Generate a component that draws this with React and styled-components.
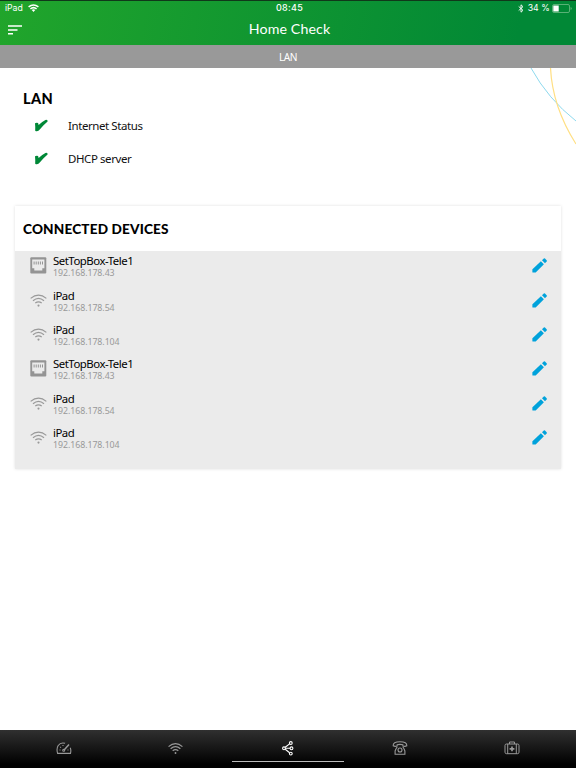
import React from 'react'
import styled, { createGlobalStyle } from 'styled-components'

const GlobalStyle = createGlobalStyle`
  html, body, #root {
    height: 100%;
    margin: 0;
  }
  body {
    overflow: hidden;
    background: #fff;
    font-family: "Noto Sans", "Open Sans", sans-serif;
  }
  svg {
    display: block;
    flex: none;
  }
`

const Screen = styled.div`
  position: relative;
  display: flex;
  flex-direction: column;
  height: 100%;
  background: #fff;
`

const Header = styled.header`
  box-sizing: border-box;
  height: 45px;
  border-top: 1px solid #10381a;
  background: linear-gradient(100deg, #21a52b 0%, #018836 90%);
  color: #fff;
`

const StatusBar = styled.div`
  display: grid;
  grid-template-columns: 1fr auto 1fr;
  align-items: center;
  height: 14px;
  padding: 0 4px 0 5px;
  font-family: Inter, "Liberation Sans", sans-serif;
  font-size: 8.7px;
  line-height: 14px;
`

const StatusLeft = styled.div`
  display: flex;
  align-items: center;
  gap: 5px;
  letter-spacing: -0.05px;
`

const Clock = styled.div`
  padding-left: 2px;
  font-size: 9px;
  font-weight: 500;
  letter-spacing: 0.3px;
`

const StatusRight = styled.div`
  display: flex;
  align-items: center;
  justify-content: flex-end;
  span {
    margin: 0 2px 0 4px;
    letter-spacing: 0.1px;
    white-space: nowrap;
  }
`

const TitleBar = styled.div`
  display: grid;
  grid-template-columns: 40px 1fr 40px;
  align-items: center;
  height: 29px;
`

const MenuButton = styled.button`
  margin: 0;
  padding: 0 0 0 8px;
  border: 0;
  background: none;
`

const Title = styled.h1`
  margin: -1px 0 0;
  padding-left: 3px;
  font-family: Lato, sans-serif;
  font-size: 14.2px;
  font-weight: 400;
  line-height: 20px;
  letter-spacing: 0.12px;
  text-align: center;
`

const SubHeader = styled.div`
  height: 23px;
  background: #999;
  color: #fff;
  font-size: 10.2px;
  line-height: 24px;
  letter-spacing: -0.5px;
  text-align: center;
`

const Arcs = styled.svg`
  position: absolute;
  top: 68px;
  right: 0;
`

const Main = styled.main`
  flex: 1;
  padding: 0 15px;
`

const Section = styled.section`
  height: 138px;
  box-sizing: border-box;
  padding: 21px 8px 0;
`

const Heading = styled.h2`
  margin: 0;
  font-family: Lato, sans-serif;
  font-size: ${p => p.$size};
  font-weight: 900;
  line-height: 20px;
  letter-spacing: ${p => p.$spacing};
  color: #000;
`

const Check = styled.div`
  display: flex;
  align-items: center;
  height: 33.6px;
  padding-left: 11px;
  gap: 20px;
  color: #111;
  font-size: 11.5px;
  letter-spacing: -0.42px;
`

const Checks = styled.div`
  margin-top: -0.5px;
`

const Card = styled.section`
  height: 262.5px;
  background: #ebebeb;
  box-shadow: 0 0 3px rgba(0, 0, 0, 0.13);
`

const CardHead = styled.div`
  display: flex;
  align-items: center;
  height: 44.5px;
  padding: 1px 8px 0;
  box-sizing: border-box;
  background: #fff;
`

const Device = styled.div`
  display: flex;
  align-items: center;
  height: 34.4px;
  box-sizing: border-box;
  padding: 0 14px 4px 15px;
`

const DeviceIcon = styled.div`
  display: flex;
  justify-content: center;
  width: 17px;
  color: #999;
`

const DeviceText = styled.div`
  flex: 1;
  padding-top: 3px;
  margin-left: 6px;
`

const Name = styled.div`
  color: #000;
  font-size: 11.4px;
  line-height: 12px;
  letter-spacing: -0.48px;
`

const Address = styled.div`
  color: #999;
  font-size: 8.8px;
  line-height: 12px;
  letter-spacing: -0.06px;
`

const TabBar = styled.nav`
  display: grid;
  grid-template-columns: repeat(5, 1fr);
  box-sizing: border-box;
  height: 38px;
  padding: 0 8px;
  background: linear-gradient(#303030, #000 90%);
`

const Tab = styled.a`
  display: flex;
  justify-content: center;
  box-sizing: border-box;
  height: 32px;
  padding: 10px 1px 0 0;
  border-bottom: ${p => (p.$active ? '1px solid #bbb' : '0')};
  color: ${p => (p.$active ? '#fff' : '#999')};
`

const WifiIcon = ({ width = 17, height = 13, stroke = 1.1 }) => (
  <svg width={width} height={height} viewBox="0 0 16 12" fill="none" stroke="currentColor" strokeWidth={stroke}>
    <path d="M.6 4Q8-2.2 15.4 4M2.8 6.2Q8 1.8 13.2 6.2M5 8.4Q8 6 11 8.4" />
    <circle cx="8" cy="10.8" r="1" fill="currentColor" stroke="none" />
  </svg>
)

const StatusWifi = () => (
  <svg width="11" height="8" viewBox="0 0 11 8" fill="none" stroke="#fff" strokeWidth="1.5">
    <path d="M.6 2.9Q5.5-1.1 10.4 2.9M2.4 4.9Q5.5 2.3 8.6 4.9" />
    <path d="M3.7 6Q5.5 4.7 7.3 6L5.5 7.9z" fill="#fff" stroke="none" />
  </svg>
)

const Bluetooth = () => (
  <svg width="6" height="9" viewBox="0 0 6 9" fill="none" stroke="#fff" strokeWidth=".9">
    <path d="M.7 2.5 5 6.3 3 8.2V.8l2 1.9L.7 6.5" />
  </svg>
)

const Battery = () => (
  <svg width="20" height="9" viewBox="0 0 20 9">
    <rect x=".5" y=".5" width="17" height="8" rx="1.5" fill="none" stroke="#70bb87" strokeWidth=".8" />
    <rect x="1.3" y="1.5" width="5.4" height="6" fill="#fff" />
    <path d="M18.6 3v3q1-.4 1-1.5t-1-1.5" fill="#70bb87" />
  </svg>
)

const CheckMark = () => (
  <svg width="14" height="13" viewBox="0 0 14 13">
    <path d="M1 4.3Q2.5 3.2 4.1 4L4.6 6Q8 2.8 11.4 1q2.6-.6 2.2 1.6Q9.5 6 4.8 11.5 2.8 12.8 1.2 11.7 1.4 7.6 1 4.3z" fill="#008837" />
  </svg>
)

const Ethernet = () => (
  <svg width="17" height="17" viewBox="0 0 17 17">
    <rect x=".3" y=".3" width="16" height="16.2" rx="1" fill="#949494" />
    <path d="M2.2 2.6h12.2v8.7h-2.1v2.1H4.3v-2.1H2.2z" fill="#ebebeb" />
    <path d="M4.1 4.5v3M6.2 4.5v3M8.3 4.5v3M10.4 4.5v3M12.5 4.5v3" stroke="#949494" strokeWidth="1" />
  </svg>
)

const Pencil = () => (
  <svg width="15" height="15" viewBox="0 0 15 15" fill="#00a2db">
    <path d="M.4 11.2 8.9 3.3l3 3L3.7 14.4H.8q-.4 0-.4-.5z" />
    <path d="m10 2.3 1.8-1.7q.6-.5 1.2 0l1.6 1.6q.5.6 0 1.2l-1.6 1.9z" />
  </svg>
)

const Gauge = () => (
  <svg width="16" height="16" viewBox="0 0 16 16" fill="none" stroke="currentColor" strokeWidth="1.1">
    <path d="M9.1 3.3Q4.6 2 2.2 5.5.2 8.5 1.6 13.4H14.5q.8-3.3-.3-5.6" />
    <path d="M8.3 9.8 13 4.6" strokeWidth="1.5" />
    <circle cx="7.7" cy="10.2" r="1" />
    <path d="M3.5 10h1M4.2 7l.8.6M7 5v1M11.5 10h1" />
  </svg>
)

const Share = () => (
  <svg width="14" height="16" viewBox="0 0 14 16" fill="none" stroke="currentColor" strokeWidth="1.1">
    <circle cx="3" cy="8.3" r="1.4" />
    <circle cx="9.8" cy="3" r="1.4" />
    <circle cx="10.5" cy="8.3" r="1.4" />
    <circle cx="9.8" cy="13.6" r="1.4" />
    <path d="M4.4 8.3H9M4.2 7.3 8.6 3.9M4.2 9.3l4.4 3.4" />
  </svg>
)

const Phone = () => (
  <svg width="16" height="16" viewBox="0 0 16 16" fill="none" stroke="currentColor" strokeWidth="1.1">
    <path d="M1.2 5.8Q.8 1.8 8 1.8t6.8 4q-1.9 1-3.9.1V4.8Q8 4 5.1 4.8v1.1Q3.1 6.8 1.2 5.8z" />
    <path d="M5.2 6.8Q3.8 9 3.1 11v3.2h9.8V11q-.7-2-2.1-4.2" />
    <circle cx="8" cy="10" r="2" />
  </svg>
)

const FirstAid = () => (
  <svg width="16" height="16" viewBox="0 0 16 16" fill="none" stroke="currentColor" strokeWidth="1">
    <rect x="1" y="4" width="14" height="9.7" rx="1.5" />
    <path d="M5.5 4V2h5v2M3.7 4v9.7M12.3 4v9.7" />
    <path d="M8 6.5v4.8M5.6 8.9h4.8" strokeWidth="1.7" />
  </svg>
)

const devices = [
  { name: 'SetTopBox-Tele1', ip: '192.168.178.43', wired: true },
  { name: 'iPad', ip: '192.168.178.54' },
  { name: 'iPad', ip: '192.168.178.104' },
  { name: 'SetTopBox-Tele1', ip: '192.168.178.43', wired: true },
  { name: 'iPad', ip: '192.168.178.54' },
  { name: 'iPad', ip: '192.168.178.104' },
]

const App = () => (
  <>
    <GlobalStyle />
    <Screen>
      <Header>
        <StatusBar>
          <StatusLeft>iPad <StatusWifi /></StatusLeft>
          <Clock>08:45</Clock>
          <StatusRight><Bluetooth /><span>34 %</span><Battery /></StatusRight>
        </StatusBar>
        <TitleBar>
          <MenuButton>
            <svg width="14" height="10" viewBox="0 0 14 10" fill="#fff">
              <path d="M0 .2h14v1.6H0zM0 4.2h9.5v1.6H0zM0 8h5v1.6H0z" />
            </svg>
          </MenuButton>
          <Title>Home Check</Title>
        </TitleBar>
      </Header>
      <SubHeader>LAN</SubHeader>

      <Arcs width="48" height="80" viewBox="0 0 48 80" fill="none">
        <path d="M3 0Q20 31 48 53" stroke="#8dd9ee" />
        <path d="M22.5 0Q24.5 39 48 76" stroke="#ffdf83" strokeWidth="1.2" />
      </Arcs>

      <Main>
        <Section>
          <Heading $size="14.5px" $spacing="0.35px">LAN</Heading>
          <Checks>
            <Check><CheckMark />Internet Status</Check>
            <Check><CheckMark />DHCP server</Check>
          </Checks>
        </Section>

        <Card>
          <CardHead>
            <Heading $size="13.6px" $spacing="0.16px">CONNECTED DEVICES</Heading>
          </CardHead>
          {devices.map((d, i) => (
            <Device key={i}>
              <DeviceIcon>{d.wired ? <Ethernet /> : <WifiIcon />}</DeviceIcon>
              <DeviceText>
                <Name>{d.name}</Name>
                <Address>{d.ip}</Address>
              </DeviceText>
              <Pencil />
            </Device>
          ))}
        </Card>
      </Main>

      <TabBar>
        <Tab><Gauge /></Tab>
        <Tab><WifiIcon width={15} height={17} stroke={1.3} /></Tab>
        <Tab $active><Share /></Tab>
        <Tab><Phone /></Tab>
        <Tab><FirstAid /></Tab>
      </TabBar>
    </Screen>
  </>
)

export default App
